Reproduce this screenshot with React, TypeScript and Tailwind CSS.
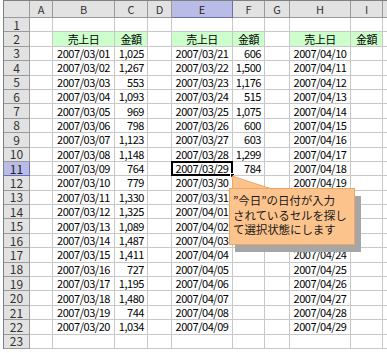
import React from "react";

const COLS = ["A", "B", "C", "D", "E", "F", "G", "H", "I", ""];

const B_DATA: [string, string][] = [
  ["2007/03/01", "1,025"],
  ["2007/03/02", "1,267"],
  ["2007/03/03", "553"],
  ["2007/03/04", "1,093"],
  ["2007/03/05", "969"],
  ["2007/03/06", "798"],
  ["2007/03/07", "1,123"],
  ["2007/03/08", "1,148"],
  ["2007/03/09", "764"],
  ["2007/03/10", "779"],
  ["2007/03/11", "1,330"],
  ["2007/03/12", "1,325"],
  ["2007/03/13", "1,089"],
  ["2007/03/14", "1,487"],
  ["2007/03/15", "1,411"],
  ["2007/03/16", "727"],
  ["2007/03/17", "1,195"],
  ["2007/03/18", "1,480"],
  ["2007/03/19", "744"],
  ["2007/03/20", "1,034"],
];

const E_DATA: [string, string][] = [
  ["2007/03/21", "606"],
  ["2007/03/22", "1,500"],
  ["2007/03/23", "1,176"],
  ["2007/03/24", "515"],
  ["2007/03/25", "1,075"],
  ["2007/03/26", "600"],
  ["2007/03/27", "603"],
  ["2007/03/28", "1,299"],
  ["2007/03/29", "784"],
  ["2007/03/30", ""],
  ["2007/03/31", ""],
  ["2007/04/01", ""],
  ["2007/04/02", ""],
  ["2007/04/03", ""],
  ["2007/04/04", ""],
  ["2007/04/05", ""],
  ["2007/04/06", ""],
  ["2007/04/07", ""],
  ["2007/04/08", ""],
  ["2007/04/09", ""],
];

const H_DATA = Array.from({ length: 20 }, (_, i) => `2007/04/${String(10 + i).padStart(2, "0")}`);

function cellContent(row: number, col: string) {
  if (row === 2) {
    if (col === "B" || col === "E" || col === "H") return "売上日";
    if (col === "C" || col === "F" || col === "I") return "金額";
    return "";
  }
  if (row < 3) return "";
  const i = row - 3;
  if (col === "B") return B_DATA[i]?.[0] ?? "";
  if (col === "C") return B_DATA[i]?.[1] ?? "";
  if (col === "E") return E_DATA[i]?.[0] ?? "";
  if (col === "F") return E_DATA[i]?.[1] ?? "";
  if (col === "H") return H_DATA[i] ?? "";
  return "";
}

const GREEN = ["B", "C", "E", "F", "H", "I"];
const RIGHT = ["C", "F", "I"];

export default function App() {
  const rows = Array.from({ length: 23 }, (_, i) => i + 1);

  return (
    <div className="relative w-[387px] h-[353px] overflow-hidden bg-white font-['Noto_Sans_CJK_JP',sans-serif] text-black">
      <div className="ml-[3px] border-l border-t border-[#808080] grid grid-cols-[26px_23px_62px_33px_24px_61px_32px_25px_61px_32px_1fr] grid-rows-[17px_repeat(23,14.4px)]">
        {/* column headers */}
        <div className="bg-[#e2e2e2] border-r border-b border-[#9a9a9a]" />
        {COLS.map((c) => (
          <div
            key={c || "end"}
            className={`flex items-center justify-center text-[11px] leading-none border-r border-b ${
              c === "E"
                ? "bg-[#b8bce6] border-[#6b6fb0] text-[#222]"
                : "bg-[#e2e2e2] border-[#9a9a9a] text-[#333]"
            }`}
          >
            {c}
          </div>
        ))}

        {rows.map((r) => (
          <React.Fragment key={r}>
            <div
              className={`flex items-center justify-center text-[12px] leading-none border-r border-b ${
                r === 11
                  ? "bg-[#b8bce6] border-[#6b6fb0] text-[#222]"
                  : "bg-[#e2e2e2] border-[#9a9a9a] text-[#333]"
              }`}
            >
              {r}
            </div>
            {COLS.map((c) => {
              const text = cellContent(r, c);
              const green = r === 2 && GREEN.includes(c);
              const selected = r === 11 && c === "E";
              return (
                <div
                  key={c || "end"}
                  className={`relative flex items-center px-[3px] text-[11px] leading-none tracking-[-0.45px] whitespace-nowrap border-r border-b border-[#c8c8c8] ${
                    green ? "bg-[#ccffcc]" : ""
                  } ${RIGHT.includes(c) && r !== 2 ? "justify-end" : "justify-center"}`}
                >
                  {text}
                  {selected && (
                    <>
                      <div className="absolute -left-px -top-px -right-px -bottom-px border-2 border-black" />
                      <div className="absolute -right-[3px] -bottom-[3px] w-[5px] h-[5px] bg-black border border-white" />
                    </>
                  )}
                </div>
              );
            })}
          </React.Fragment>
        ))}
      </div>

      {/* callout shadow */}
      <div className="absolute left-[235px] top-[196px] w-[126px] h-[56px] bg-[#a6a6a6]" />
      {/* callout pointer */}
      <svg className="absolute left-0 top-0" width="387" height="353">
        <polygon points="232,176 233,189 272,189" fill="#fcc48c" stroke="#e89a58" strokeWidth="0.8" />
      </svg>
      <div className="absolute left-[229px] top-[188px] w-[126px] h-[57px] bg-[#fcc48c] border border-[#eaa868] px-[3px] pt-[4px] text-[11.5px] leading-[14.6px] tracking-[-0.1px] whitespace-nowrap text-[#1a1a1a]">
        <div>”今日”の日付が入力</div>
        <div>されているセルを探し</div>
        <div>て選択状態にします</div>
      </div>
    </div>
  );
}
